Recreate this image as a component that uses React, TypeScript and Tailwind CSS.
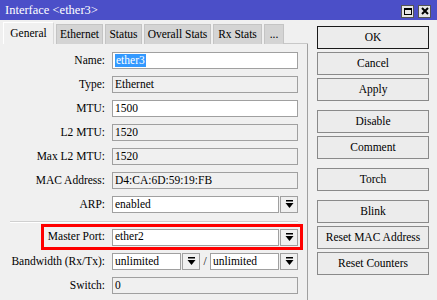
import React from "react"

const font = { fontFamily: '"Liberation Serif", "Times New Roman", serif' }

function DropBtn() {
    return (
        <div className="w-[18px] h-[17px] ml-[1px] border border-[#a0a0a0] bg-[#f0f0f0] flex items-center justify-center shrink-0">
            <svg width="9" height="9" viewBox="0 0 9 9">
                <rect x="1" y="0" width="7" height="1.5" fill="#000" />
                <polygon points="0.5,3 8.5,3 4.5,8" fill="#000" />
            </svg>
        </div>
    )
}

function Field({ value, ro, w = "w-[186px]", sel }: { value: string; ro?: boolean; w?: string; sel?: boolean }) {
    return (
        <div className={`${w} h-[17px] border border-[#a0a0a0] ${ro ? "bg-[#f0f0f0]" : "bg-white"} flex items-center px-[2px] leading-none shrink-0`}>
            {sel ? <span className="bg-[#3399ff] text-white px-[1px] leading-[13px]">{value}</span> : <span>{value}</span>}
        </div>
    )
}

function Row({ label, children }: { label: string; children: React.ReactNode }) {
    return (
        <div className="flex items-center h-[17px]">
            <div className="w-[106px] text-right pr-[1px]">{label}</div>
            <div className="ml-[6px] flex items-center">{children}</div>
        </div>
    )
}

function Btn({ label, ok }: { label: string; ok?: boolean }) {
    return (
        <div className={`h-[23px] flex items-center justify-center bg-[#ececec] border ${ok ? "border-[#1a1a1a]" : "border-[#8a8a8a]"}`}>
            {label}
        </div>
    )
}

const tabs = [
    { t: "Ethernet", w: "w-[47px]" },
    { t: "Status", w: "w-[37px]" },
    { t: "Overall Stats", w: "w-[67px]" },
    { t: "Rx Stats", w: "w-[49px]" },
    { t: "...", w: "w-[20px]" },
]

export default function App() {
    return (
        <div className="w-[437px] h-[300px] bg-[#f0f0f0] text-[11.5px] text-black overflow-hidden" style={font}>
            <div className="h-[20px] bg-[#4b4fc8] flex items-center justify-between pl-[5px] pr-[6px]">
                <span className="text-white text-[12.5px]">Interface &lt;ether3&gt;</span>
                <div className="flex gap-[4px] mt-[2px]">
                    <div className="w-[13px] h-[13px] bg-[#e6e6e6] border border-[#555] flex items-center justify-center">
                        <div className="w-[8px] h-[7px] border border-black border-t-2" />
                    </div>
                    <div className="w-[13px] h-[13px] bg-[#e6e6e6] border border-[#555] flex items-center justify-center">
                        <svg width="8" height="8" viewBox="0 0 8 8">
                            <path d="M1 1 L7 7 M7 1 L1 7" stroke="#000" strokeWidth="2" />
                        </svg>
                    </div>
                </div>
            </div>

            <div className="flex">
                <div className="w-[308px] pl-[3px]">
                    <div className="flex items-end h-[24px] pt-[2px]">
                        <div className="h-[22px] w-[51px] flex items-center justify-center bg-[#f0f0f0] border-l border-t border-r border-[#d8d8d8] border-l-white border-t-white">
                            General
                        </div>
                        {tabs.map((x) => (
                            <div key={x.t} className={`${x.w} h-[20px] ml-[2px] flex items-center justify-center bg-[#d4d4d4] border-t border-r border-l border-[#c4c4c4]`}>
                                {x.t}
                            </div>
                        ))}
                        <div className="flex-1 border-b border-[#c8c8c8]" />
                    </div>
                    <div className="h-[256px] border-r border-[#a0a0a0] -ml-[3px] pt-[8px] pr-[9px] flex flex-col">
                        <div className="flex flex-col gap-[7px]">
                            <Row label="Name:"><Field value="ether3" sel /></Row>
                            <Row label="Type:"><Field value="Ethernet" ro /></Row>
                            <Row label="MTU:"><Field value="1500" /></Row>
                            <Row label="L2 MTU:"><Field value="1520" ro /></Row>
                            <Row label="Max L2 MTU:"><Field value="1520" ro /></Row>
                            <Row label="MAC Address:"><Field value="D4:CA:6D:59:19:FB" ro /></Row>
                            <Row label="ARP:"><Field value="enabled" w="w-[167px]" /><DropBtn /></Row>
                        </div>
                        <div className="ml-[10px] mt-[8px] h-[2px] border-t border-[#d0d0d0] border-b border-b-white" />
                        <div className="ml-[41px] mt-[1px] w-[262px] h-[26px] border-[3px] border-[#ff0000] flex items-center">
                            <div className="w-[62px] text-right pr-[1px]">Master Port:</div>
                            <div className="ml-[6px] flex items-center">
                                <Field value="ether2" w="w-[167px]" />
                                <DropBtn />
                            </div>
                        </div>
                        <div className="mt-[3px] flex flex-col gap-[7px]">
                            <Row label="Bandwidth (Rx/Tx):">
                                <Field value="unlimited" w="w-[69px]" />
                                <DropBtn />
                                <span className="w-[10px] text-center">/</span>
                                <Field value="unlimited" w="w-[69px]" />
                                <DropBtn />
                            </Row>
                            <Row label="Switch:"><Field value="0" ro /></Row>
                        </div>
                    </div>
                </div>

                <div className="ml-[9px] mt-[6px] w-[112px] flex flex-col">
                    <div className="flex flex-col gap-[3px]">
                        <Btn label="OK" ok />
                        <Btn label="Cancel" />
                        <Btn label="Apply" />
                    </div>
                    <div className="mt-[9px] flex flex-col gap-[3px]">
                        <Btn label="Disable" />
                        <Btn label="Comment" />
                    </div>
                    <div className="mt-[9px]">
                        <Btn label="Torch" />
                    </div>
                    <div className="mt-[9px] flex flex-col gap-[3px]">
                        <Btn label="Blink" />
                        <Btn label="Reset MAC Address" />
                        <Btn label="Reset Counters" />
                    </div>
                </div>
            </div>
        </div>
    )
}
